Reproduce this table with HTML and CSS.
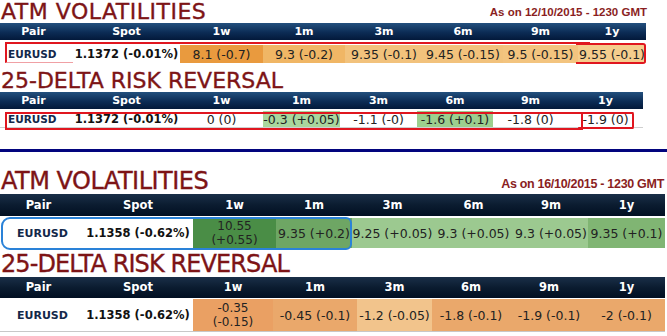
FILE: index.html
```html
<!DOCTYPE html>
<html>
<head>
<meta charset="utf-8">
<link rel="stylesheet" href="styles.css">
</head>
<body>
<div class="shot shot-a">
  <div class="titlebar">
    <h1 class="title title-atm">ATM VOLATILITIES</h1>
    <span class="asof">As on 12/10/2015 - 1230 GMT</span>
  </div>
  <div class="grid cols-a1 head">
    <div class="pair-h">Pair</div><div>Spot</div><div>1w</div><div>1m</div><div>3m</div><div>6m</div><div>9m</div><div>1y</div>
  </div>
  <div class="grid cols-a1 row row-a1">
    <div class="pair">EURUSD</div><div class="spot">1.1372 (-0.01%)</div>
    <div class="o1">8.1 (-0.7)</div><div class="o2">9.3 (-0.2)</div><div class="o3">9.35 (-0.1)</div><div class="o3">9.45 (-0.15)</div><div class="o4">9.5 (-0.15)</div><div class="o5">9.55 (-0.1)</div>
  </div>
  <h1 class="title title-rr">25-DELTA RISK REVERSAL</h1>
  <div class="grid cols-a2 head">
    <div class="pair-h">Pair</div><div>Spot</div><div>1w</div><div>1m</div><div>3m</div><div>6m</div><div>9m</div><div>1y</div>
  </div>
  <div class="grid cols-a2 row row-a2">
    <div class="pair">EURUSD</div><div class="spot">1.1372 (-0.01%)</div>
    <div>0 (0)</div><div class="g1">-0.3 (+0.05)</div><div>-1.1 (-0)</div><div class="g2">-1.6 (+0.1)</div><div>-1.8 (0)</div><div>-1.9 (0)</div>
  </div>
  <div class="mark m-topline"></div>
  <div class="mark m-pair1"></div>
  <div class="mark m-1y"></div>
  <div class="mark m-rr"></div>
  <div class="mark m-rr0"></div>
</div>
<div class="sep"></div>
<div class="shot shot-b">
  <div class="band"></div>
  <div class="titlebar titlebar-b">
    <h1 class="title big">ATM VOLATILITIES</h1>
    <span class="asof asof-b">As on 16/10/2015 - 1230 GMT</span>
  </div>
  <div class="grid cols-b1 head head-b">
    <div class="pair-h">Pair</div><div>Spot</div><div>1w</div><div>1m</div><div>3m</div><div>6m</div><div>9m</div><div>1y</div>
  </div>
  <div class="grid cols-b1 row row-b">
    <div class="pair pair-b">EURUSD</div><div class="spot">1.1358 (-0.62%)</div>
    <div class="dg two">10.55<br>(+0.55)</div><div class="mg">9.35 (+0.2)</div><div class="lg">9.25 (+0.05)</div><div class="lg">9.3 (+0.05)</div><div class="lg">9.3 (+0.05)</div><div class="mg2">9.35 (+0.1)</div>
  </div>
  <h1 class="title big title-rr-b">25-DELTA RISK REVERSAL</h1>
  <div class="grid cols-b2 head head-b head-b2">
    <div class="pair-h">Pair</div><div>Spot</div><div>1w</div><div>1m</div><div>3m</div><div>6m</div><div>9m</div><div>1y</div>
  </div>
  <div class="grid cols-b2 row row-b row-b2">
    <div class="pair pair-b">EURUSD</div><div class="spot">1.1358 (-0.62%)</div>
    <div class="r1 two">-0.35<br>(-0.15)</div><div class="r2">-0.45 (-0.1)</div><div class="r3">-1.2 (-0.05)</div><div class="r2">-1.8 (-0.1)</div><div class="r2">-1.9 (-0.1)</div><div class="r2">-2 (-0.1)</div>
  </div>
  <div class="mark m-blue"></div>
</div>
</body>
</html>
```
FILE: styles.css
```css
* { box-sizing: border-box; margin: 0; padding: 0; }
html, body { background: #fff; }
body {
  width: 667px;
  height: 336px;
  overflow: hidden;
  font-family: "DejaVu Sans", Verdana, sans-serif;
  color: #222;
}
.shot { position: relative; }
.shot-a { height: 149px; }
.titlebar {
  display: flex;
  justify-content: space-between;
  align-items: flex-end;
  height: 22px;
}
.title {
  font-family: "DejaVu Sans", sans-serif;
  font-weight: normal;
  font-size: 22px;
  line-height: 22px;
  color: #7d1416;
  padding-left: 1px;
  padding-top: 1px;
  height: 22px;
  -webkit-text-stroke: 0.35px #7d1416;
  white-space: nowrap;
}
.title-atm { letter-spacing: 0.5px; }
.asof {
  font-family: "Liberation Sans", Arial, sans-serif;
  font-weight: bold;
  font-size: 11.5px;
  line-height: 13px;
  color: #8a1e22;
  padding-right: 20px;
  padding-bottom: 3px;
}
.grid { display: grid; }
.cols-a1 { grid-template-columns: 73px 107px 83px 82px 78px 80px 75px 68px; width: 646px; }
.cols-a2 { grid-template-columns: 73px 107px 83px 77px 77px 76px 75px 75px; width: 643px; }
.cols-b1 { grid-template-columns: 83px 110px 83px 76px 81px 81px 74px 77px; width: 665px; }
.cols-b2 { grid-template-columns: 83px 110px 80px 84px 75px 78px 78px 77px; width: 665px; }
.head {
  margin-top: 1px;
  height: 17px;
  background: linear-gradient(#23507e, #0c2c55 55%, #03193a);
  color: #fff;
  font-weight: bold;
  font-size: 11px;
  align-items: center;
  text-align: center;
}
.head > div { line-height: 17px; }
.head .pair-h { padding-right: 6px; }
.row {
  font-size: 12.5px;
  align-items: stretch;
  text-align: center;
  white-space: nowrap;
}
.row > div { display: flex; align-items: center; justify-content: center; }
.row-a1 { margin-top: 5px; height: 18px; }
.row-a2 { margin-top: 2px; height: 17px; border-bottom: 1px solid #cfcfcf; }
.pair {
  font-weight: bold;
  font-size: 10.5px;
  color: #13284a;
  justify-content: flex-start !important;
  padding-left: 8px;
}
.spot { font-weight: bold; font-size: 11.5px; color: #111; }
.o1 { background: #e99a3e; }
.o2 { background: #f0b665; }
.o3 { background: #f2c27c; }
.o4 { background: #f3c47f; }
.o5 { background: #f5cd8d; }
.g1 { background: #a9d69d; }
.g2 { background: #9ccf8e; }
.title-rr { margin-top: 6px; }

.mark { position: absolute; border-color: #e0161f; border-style: solid; border-width: 0; }
.m-topline { left: 5px; top: 42px; width: 585px; height: 0; border-top-width: 2px; }
.m-pair1 { left: 5px; top: 42px; width: 68px; height: 21px; border-left-width: 2px; border-bottom: 1px solid #f0a0a4; border-top-width: 2px; }
.m-1y { left: 576px; top: 43px; width: 70px; height: 21px; border-width: 2px 2px 2px 0; border-radius: 0 3px 3px 0; }
.m-rr { left: 5px; top: 112px; width: 578px; height: 18px; border-width: 2px; }
.m-rr0 { left: 578px; top: 112px; width: 56px; height: 17px; border-width: 2px; border-left-width: 0; border-radius: 2px; }

.sep { height: 3px; background: #02047e; }
.shot-b { padding-top: 18px; }
.band { position: absolute; left: 0; top: 15px; width: 665px; height: 5px; background: #eef1f8; z-index: -1; }
.big { font-size: 24px; line-height: 22px; letter-spacing: -0.5px; padding-top: 0; }
.titlebar-b { height: 22px; }
.asof-b { font-size: 12.5px; letter-spacing: -0.3px; padding-right: 3px; padding-bottom: 1px; }
.head-b {
  margin-top: 2px;
  height: 22px;
  background: linear-gradient(#1a2f48, #0b1c30 50%, #010f22);
  font-size: 11.5px;
}
.head-b > div { line-height: 22px; }
.head-b2 { height: 21px; }
.head-b2 > div { line-height: 21px; }
.row-b { margin-top: 2px; height: 30px; }
.row-b2 { margin-top: 1px; border-bottom: 1px solid #c8c8c8; height: 33px; }
.pair-b { padding-left: 17px; font-size: 11px; }
.two { line-height: 14px; font-size: 12px; text-align: center; flex-direction: column; }
.dg { background: #4a8d46; }
.mg { background: #6ea664; }
.lg { background: #9cc990; }
.mg2 { background: #80b573; }
.r1 { background: #eaa063; }
.r2 { background: #eaa86b; }
.r3 { background: #f2c48c; }
.title-rr-b { margin-top: 5px; letter-spacing: -0.9px; }
.m-blue { left: 1px; top: 65px; width: 351px; height: 33px; border-width: 2px; border-color: #2a82d8; border-radius: 9px 6px 6px 9px; }
```
